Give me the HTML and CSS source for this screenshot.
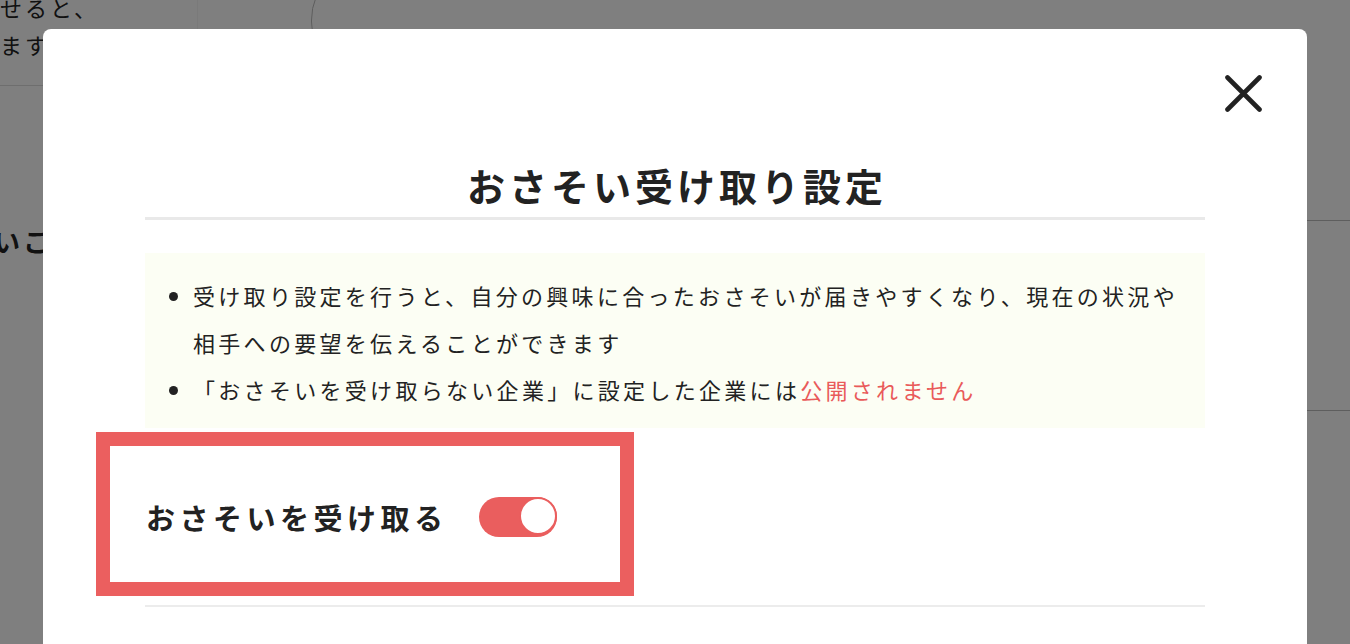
FILE: index.html
```html
<!DOCTYPE html>
<html lang="ja">
<head>
    <meta charset="UTF-8">
    <title>おさそい受け取り設定</title>
    <meta name="viewport" content="width=device-width, initial-scale=1.0">
    <link rel="stylesheet" href="styles.css">
</head>
<body>
    <div id="page">
        <div class="page-top">
            <div class="page-lead">
                <p>せると、</p>
                <p>ます</p>
            </div>
            <div class="page-search">
                <div class="search-pill"></div>
            </div>
        </div>
        <div class="page-body">
            <h3 class="page-heading">いこ</h3>
            <div class="page-side">
                <div class="side-row"></div>
                <div class="side-row"></div>
            </div>
        </div>
    </div>

    <div id="overlay"></div>

    <div id="modal">
        <button class="close" type="button" aria-label="閉じる">
            <svg width="37" height="37" viewBox="0 0 37 37">
                <path d="M2.5 2.5 L34.5 34.5 M34.5 2.5 L2.5 34.5" stroke="#222" stroke-width="4.6" stroke-linecap="round" fill="none"/>
            </svg>
        </button>

        <h2 class="modal-title">おさそい受け取り設定</h2>

        <div class="notice">
            <ul>
                <li>受け取り設定を行うと、自分の興味に合ったおさそいが届きやすくなり、現在の状況や相手への要望を伝えることができます</li>
                <li>「おさそいを受け取らない企業」に設定した企業には<span class="warn">公開されません</span></li>
            </ul>
        </div>

        <div class="setting-row">
            <span class="setting-label">おさそいを受け取る</span>
            <label class="switch">
                <input type="checkbox" checked>
                <span class="slider"></span>
            </label>
        </div>

        <div class="highlight"></div>
    </div>
</body>
</html>
```

FILE: styles.css
```css
body {
    margin: 0;
    font-family: 'Noto Sans CJK JP', 'Noto Sans', sans-serif;
    color: #222;
    background: #fff;
    overflow: hidden;
    height: 100vh;
}

/* page behind the modal */
#page { height: 100vh; }
.page-top {
    display: flex;
    width: 1307px;
    height: 85px;
    border-bottom: 1px solid #dcdcdc;
}
.page-lead {
    width: 197px;
    border-right: 1px solid #f4f4f4;
    font-size: 22px;
    letter-spacing: 3px;
}
.page-lead p { margin: 0; line-height: 37px; position: relative; top: -11px; }
.page-search { flex: 1; padding-left: 113px; overflow: hidden; }
.search-pill {
    width: 1200px;
    height: 120px;
    margin-top: -40px;
    border: 1px solid #bbb;
    border-radius: 60px;
}
.page-body { display: flex; justify-content: space-between; }
.page-heading {
    margin: 136px 0 0 -6px;
    font-size: 26px;
    letter-spacing: 3px;
}
.page-side { width: 300px; padding-top: 134px; }
.side-row { height: 189px; border-top: 1px solid #bdbdbd; }

#overlay {
    position: fixed;
    inset: 0;
    background: rgba(0, 0, 0, 0.5);
}

/* modal */
#modal {
    position: fixed;
    top: 29px;
    left: 43px;
    width: 1264px;
    height: 700px;
    box-sizing: border-box;
    padding: 131px 102px 0;
    background: #fff;
    border-radius: 8px;
}
.close {
    position: absolute;
    top: 46px;
    right: 45px;
    width: 37px;
    height: 37px;
    padding: 0;
    border: none;
    background: none;
    cursor: pointer;
}
.close svg { display: block; }

.modal-title {
    margin: 0;
    padding: 0 0 7px 4px;
    font-size: 38px;
    line-height: 50px;
    font-weight: 700;
    letter-spacing: 4px;
    text-align: center;
    border-bottom: 3px solid #e9e9e9;
}

.notice {
    margin-top: 33px;
    padding: 19px 20px 15px 0;
    background: #fcfef4;
}
.notice ul {
    margin: 0;
    padding-left: 48px;
    font-size: 22px;
    line-height: 47px;
    letter-spacing: 3.3px;
    color: #222;
}
.warn { color: #e95a5a; }

.setting-row {
    display: flex;
    align-items: center;
    gap: 31px;
    height: 177px;
    padding-left: 1px;
    border-bottom: 2px solid #ececec;
}
.setting-label {
    font-size: 29px;
    font-weight: 700;
    letter-spacing: 4.5px;
}
.switch {
    position: relative;
    display: inline-block;
    width: 78px;
    height: 40px;
}
.switch input { display: none; }
.slider {
    position: absolute;
    inset: 0;
    border-radius: 20px;
    background: #ea5e5e;
}
.slider::before {
    content: '';
    position: absolute;
    top: 0;
    right: 0;
    width: 34px;
    height: 34px;
    border: 2px solid #ea5e5e;
    border-radius: 50%;
    background: #fff;
    box-sizing: content-box;
}

/* annotation frame round the switch row */
.highlight {
    position: absolute;
    left: 53px;
    top: 403px;
    width: 510px;
    height: 136px;
    border: 14px solid #eb5f5f;
}
```
